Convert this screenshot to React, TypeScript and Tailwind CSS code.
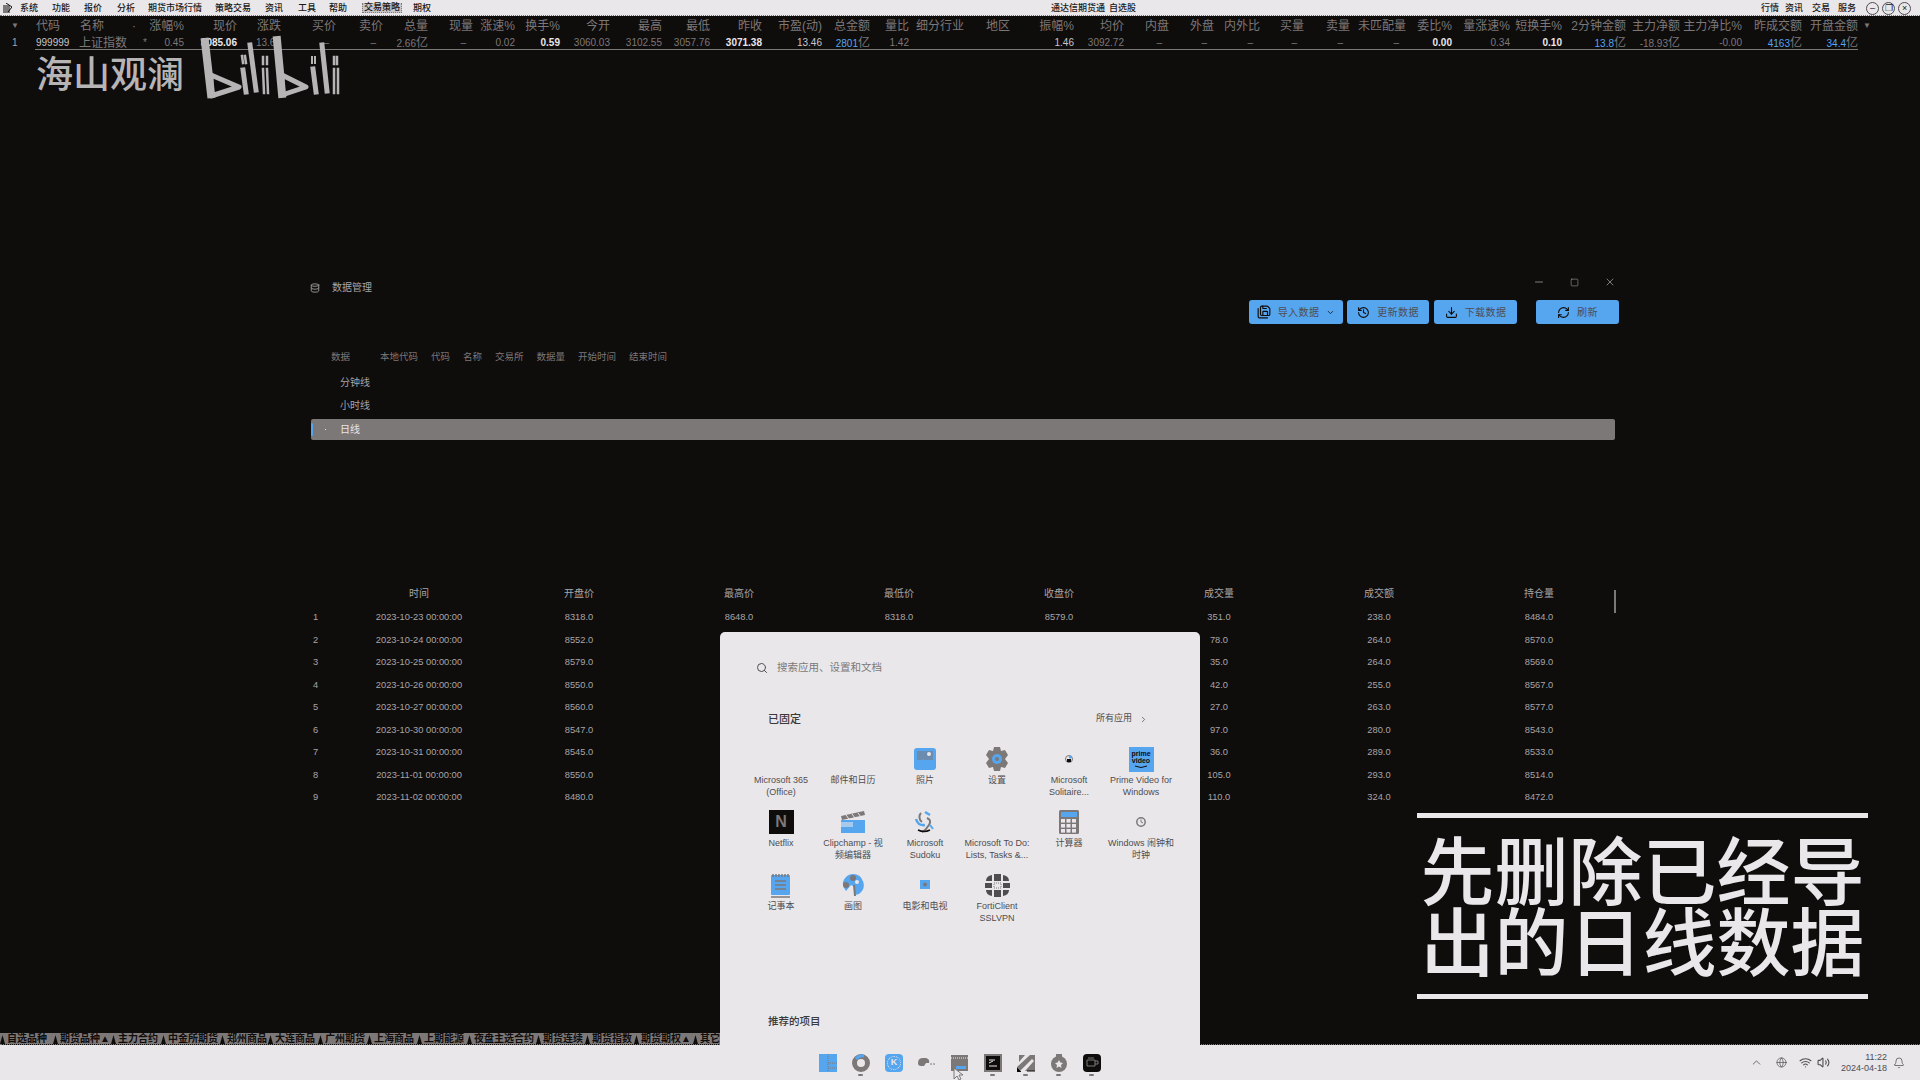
import React from "react";
import {
  Bell, ChevronDown, ChevronRight, ChevronUp, Database, Download, Globe, History,
  Minus, RefreshCw, SaveAll, Search, Square, Volume2, Wifi, X,
} from "lucide-react";

const B = "#56a5ef";
const G = "#7d7878";
const D = "#0f0c0c";

const menus: [string, number][] = [
  ["系统", 18], ["功能", 18], ["报价", 19], ["分析", 17], ["期货市场行情", 53], ["策略交易", 36],
  ["资讯", 19], ["工具", 17], ["帮助", 17],
];

type Col = { h: string; r: number; d?: React.ReactNode; c?: string };
const Yi = ({ n, c = "text-[#56a5ef]" }: { n: string; c?: string }) => (
  <span className="text-[#7d7878]"><span className={c}>{n}</span><span className="text-[12px]">亿</span></span>
);
const dash = <span className="pr-[7px] text-[#7d7878]">–</span>;
const cols: Col[] = [
  { h: "涨幅%", r: 184, d: "0.45" },
  { h: "现价", r: 237, d: <span className="text-[#e9e7ea] font-bold">3085.06</span> },
  { h: "涨跌", r: 281, d: "13.68" },
  { h: "买价", r: 336, d: dash },
  { h: "卖价", r: 383, d: dash },
  { h: "总量", r: 428, d: <Yi n="2.66" c="text-[#7d7878]" /> },
  { h: "现量", r: 473, d: dash },
  { h: "涨速%", r: 515, d: "0.02" },
  { h: "换手%", r: 560, d: <span className="text-[#e9e7ea] font-bold">0.59</span> },
  { h: "今开", r: 610, d: "3060.03" },
  { h: "最高", r: 662, d: "3102.55" },
  { h: "最低", r: 710, d: "3057.76" },
  { h: "昨收", r: 762, d: <span className="text-[#e9e7ea] font-bold">3071.38</span> },
  { h: "市盈(动)", r: 822, d: <span className="text-[#c8c6c8]">13.46</span> },
  { h: "总金额", r: 870, d: <Yi n="2801" /> },
  { h: "量比", r: 909, d: "1.42" },
  { h: "细分行业", r: 964 },
  { h: "地区", r: 1010 },
  { h: "振幅%", r: 1074, d: <span className="text-[#c8c6c8]">1.46</span> },
  { h: "均价", r: 1124, d: "3092.72" },
  { h: "内盘", r: 1169, d: dash },
  { h: "外盘", r: 1214, d: dash },
  { h: "内外比", r: 1260, d: dash },
  { h: "买量", r: 1304, d: dash },
  { h: "卖量", r: 1350, d: dash },
  { h: "未匹配量", r: 1406, d: dash },
  { h: "委比%", r: 1452, d: <span className="text-[#e9e7ea] font-bold">0.00</span> },
  { h: "量涨速%", r: 1510, d: "0.34" },
  { h: "短换手%", r: 1562, d: <span className="text-[#e9e7ea] font-bold">0.10</span> },
  { h: "2分钟金额", r: 1626, d: <Yi n="13.8" /> },
  { h: "主力净额", r: 1680, d: <Yi n="-18.93" c="text-[#7d7878]" /> },
  { h: "主力净比%", r: 1742, d: "-0.00" },
  { h: "昨成交额", r: 1802, d: <Yi n="4163" /> },
  { h: "开盘金额", r: 1858, d: <Yi n="34.4" /> },
];
const widthOf = (i: number) => cols[i].r - (i === 0 ? 150 : cols[i - 1].r);

const table = [
  ["2023-10-23 00:00:00", "8318.0", "8648.0", "8318.0", "8579.0", "351.0", "238.0", "8484.0"],
  ["2023-10-24 00:00:00", "8552.0", "", "", "", "78.0", "264.0", "8570.0"],
  ["2023-10-25 00:00:00", "8579.0", "", "", "", "35.0", "264.0", "8569.0"],
  ["2023-10-26 00:00:00", "8550.0", "", "", "", "42.0", "255.0", "8567.0"],
  ["2023-10-27 00:00:00", "8560.0", "", "", "", "27.0", "263.0", "8577.0"],
  ["2023-10-30 00:00:00", "8547.0", "", "", "", "97.0", "280.0", "8543.0"],
  ["2023-10-31 00:00:00", "8545.0", "", "", "", "36.0", "289.0", "8533.0"],
  ["2023-11-01 00:00:00", "8550.0", "", "", "", "105.0", "293.0", "8514.0"],
  ["2023-11-02 00:00:00", "8480.0", "", "", "", "110.0", "324.0", "8472.0"],
];

const tabs: [string, number][] = [
  ["自选品种", 53], ["期货品种▲", 58], ["主力合约", 50], ["中金所期货", 59], ["郑州商品", 48], ["大连商品", 50],
  ["广州期货", 49], ["上海商品", 50], ["上期能源", 50], ["夜盘主选合约", 69], ["期货连续", 49], ["期货指数", 49],
  ["期货期权▲", 59], ["其它", 27],
];

const Photos = () => (
  <svg width="22" height="22" viewBox="0 0 22 22"><rect width="22" height="22" rx="3" fill={B} /><rect x="3" y="3" width="16" height="9" fill={G} opacity=".55" /><path d="M1 20 9 11l4 4 3-3 5 8z" fill={B} /><circle cx="15" cy="6" r="2" fill="#e9e7ea" /></svg>
);
const Gear = () => (
  <svg width="26" height="26" viewBox="0 0 26 26"><path d="M10 1h6l1 4 4-1 3 5-3 4 3 4-3 5-4-1-1 4h-6l-1-4-4 1-3-5 3-4-3-4 3-5 4 1z" fill={G} /><circle cx="13" cy="13" r="5" fill={B} /><circle cx="13" cy="13" r="2" fill={G} /></svg>
);
const Sol = () => (
  <svg width="26" height="26" viewBox="0 0 26 26"><circle cx="13" cy="13" r="3.5" fill="#e9e7ea" stroke={G} /><rect x="11" y="13" width="4" height="3" fill={D} /><circle cx="14.5" cy="11" r="1.6" fill={B} /></svg>
);
const Prime = () => (
  <div className="relative flex h-[25px] w-[25px] flex-col items-center bg-[#56a5ef] pt-[3px] text-[7px] font-bold leading-[7px] text-[#0f0c0c]">
    <span>prime</span><span>video</span>
    <svg className="mt-[1px]" width="14" height="4" viewBox="0 0 14 4"><path d="M1 1q6 3 12 0" stroke={D} fill="none" /></svg>
  </div>
);
const Netflix = () => (
  <div className="flex h-[24px] w-[25px] items-center justify-center bg-[#0f0c0c] font-['Liberation_Sans'] text-[16px] font-bold leading-none text-[#7d7878]">N</div>
);
const Clip = () => (
  <svg width="26" height="24" viewBox="0 0 26 24"><rect x="1" y="10" width="24" height="13" fill={B} /><path d="M1 12h12v5H1z" fill="#e9e7ea" opacity=".55" /><path d="M1 6 24 1l1 4L2 10z" fill={G} /><path d="M6 5l3 4M12 4l3 4M18 3l3 4" stroke="#e9e7ea" /></svg>
);
const Sudoku = () => (
  <svg width="24" height="24" viewBox="0 0 24 24" fill="none"><path d="M8 3a6 6 0 0 0 1 9" stroke={G} strokeWidth="2" /><path d="M3 9q2 7 9 6" stroke={B} strokeWidth="2.5" /><path d="M12 2l5 3" stroke={B} strokeWidth="2.5" /><path d="M14 8q5 2 2 7t-7 7" stroke={G} strokeWidth="2" /><path d="M5 20q6 3 12 0" stroke={D} strokeWidth="1.5" /><path d="M17 15l3 4" stroke={B} strokeWidth="2" /></svg>
);
const Calc = () => (
  <svg width="20" height="24" viewBox="0 0 20 24"><rect width="20" height="24" rx="1.5" fill={G} /><rect x="2" y="2" width="16" height="5" fill={B} />{[0, 1, 2].flatMap((r) => [0, 1, 2].map((c) => <rect key={`${r}${c}`} x={2 + c * 5.5} y={9 + r * 5} width="4" height="3.6" fill="#e9e7ea" />))}</svg>
);
const Clock = () => (
  <svg width="12" height="12" viewBox="0 0 12 12" fill="none"><circle cx="6" cy="6" r="4.2" stroke={G} strokeWidth="1.5" /><path d="M6 3.5V6l2 1" stroke={G} /></svg>
);
const Notepad = () => (
  <svg width="20" height="25" viewBox="0 0 20 25"><rect x="0" y="2" width="19" height="20" rx="1" fill={B} /><path d="M2 1v3M5 1v3M8 1v3M11 1v3M14 1v3M17 1v3" stroke={G} strokeWidth="1.5" /><path d="M4 8h11M4 12h11M4 16h11" stroke={G} strokeWidth="1.3" /><path d="M0 24h19" stroke={G} strokeWidth="1.5" /></svg>
);
const Paint = () => (
  <svg width="24" height="24" viewBox="0 0 24 24"><path d="M12 1a11 11 0 0 1 6 20l-4 1V14l-4-2-5 6Q1 13 2 9 5 1 12 1z" fill={B} /><circle cx="5" cy="12" r="3" fill={G} /><circle cx="12" cy="5" r="3" fill={G} /><circle cx="16" cy="9" r="2" fill="#e9e7ea" /><path d="M13 12l1 11" stroke={G} strokeWidth="2" /></svg>
);
const Movie = () => (
  <svg width="10" height="10" viewBox="0 0 10 10"><rect width="10" height="9" fill={B} /><circle cx="5" cy="4.5" r="2" fill={G} /></svg>
);
const Forti = () => (
  <svg width="25" height="23" viewBox="0 0 25 23" fill="#4f4d50">
    <path d="M1 7q0-5 6-6v6zM18 1q6 1 6 6h-6zM1 16h6v6q-6-1-6-6zM18 16h6q0 5-6 6z" />
    <rect x="9" y="0" width="7" height="7" />
    <rect x="9" y="16" width="7" height="7" />
    <rect x="0" y="9" width="7" height="5" />
    <rect x="18" y="9" width="7" height="5" />
    <rect x="9" y="9" width="7" height="5" fill="#e9e7ea" stroke="#7d7878" strokeDasharray="1 1" />
  </svg>
);

const apps: [string[], React.ReactNode][] = [
  [["Microsoft 365", "(Office)"], null],
  [["邮件和日历"], null],
  [["照片"], <Photos />],
  [["设置"], <Gear />],
  [["Microsoft", "Solitaire..."], <Sol />],
  [["Prime Video for", "Windows"], <Prime />],
  [["Netflix"], <Netflix />],
  [["Clipchamp - 视", "频编辑器"], <Clip />],
  [["Microsoft", "Sudoku"], <Sudoku />],
  [["Microsoft To Do:", "Lists, Tasks &..."], null],
  [["计算器"], <Calc />],
  [["Windows 闹钟和", "时钟"], <Clock />],
  [["记事本"], <Notepad />],
  [["画图"], <Paint />],
  [["电影和电视"], <Movie />],
  [["FortiClient", "SSLVPN"], <Forti />],
];

const task: [React.ReactNode, boolean][] = [
  [<svg width="18" height="18" viewBox="0 0 18 18"><rect width="18" height="18" fill={B} /><path d="M9 0v18M9 9h9M9 14h9" stroke={G} strokeDasharray="1 1" /></svg>, false],
  [<svg width="18" height="18" viewBox="0 0 18 18" fill="none"><circle cx="9" cy="9" r="6.5" stroke={G} strokeWidth="5" /><path d="M4 5q3-4 8-3" stroke={B} strokeWidth="3" /></svg>, true],
  [<div className="flex h-[18px] w-[18px] items-center justify-center rounded-[4px] bg-[#56a5ef]"><div className="flex h-[14px] w-[14px] items-center justify-center rounded-full border border-dotted border-[#e9e7ea] font-['Liberation_Sans'] text-[9px] font-bold text-[#e9e7ea]">K</div></div>, false],
  [<svg width="18" height="18" viewBox="0 0 18 18" fill={G}><path d="M0 9q0-5 5-5h3q4 1 3 5h-3l-2 3H3Q0 12 0 9z" /><path d="M12 10h2M15 10h2" stroke={G} /></svg>, false],
  [<svg width="18" height="18" viewBox="0 0 18 18"><path d="M0 1h17v16H0z" fill={G} /><path d="M5 12h10v3H5z" fill={B} /><path d="M0 4h17" stroke="#e9e7ea" strokeDasharray="1 1" /></svg>, false],
  [<svg width="18" height="18" viewBox="0 0 18 18"><rect width="18" height="18" fill={G} /><rect x="2" y="2" width="14" height="14" fill={D} /><path d="M5 6h6M5 9l4-2M5 12h8" stroke="#e9e7ea" /></svg>, true],
  [<svg width="18" height="18" viewBox="0 0 18 18"><path d="M2 1h6L2 8z" fill={G} /><path d="M18 1v16H0V13L13 1z" fill={G} /><path d="M3 17 15 5l2 2L8 17z" fill="#e9e7ea" /><path d="M0 14v4h4zM10 17h8" stroke={D} /></svg>, true],
  [<svg width="18" height="18" viewBox="0 0 18 18" fill={G}><rect x="6" y="0" width="6" height="3" /><circle cx="9" cy="10" r="8" /><path d="M9 6l1.3 2.6 2.7.4-2 2 .5 3L9 12.5 6.500 14l.5-3-2-2 2.700-.4z" fill="#e9e7ea" /></svg>, true],
  [<div className="flex h-[18px] w-[18px] items-center justify-center rounded-[4px] bg-[#0f0c0c]"><svg width="13" height="11" viewBox="0 0 13 11" fill="none" stroke="#7d7878"><path d="M1 3h8v6H1zM9 4h3v3H9M3 0v2M5 0v2M7 0v2" /></svg></div>, true],
];

const Bili = () => (
  <svg className="absolute left-[200px] top-[34px]" width="145" height="66" viewBox="200 34 145 66" fill="none" stroke="#b7b4b6" strokeLinecap="square">
    <path d="M205 42l6 52" strokeWidth="8" />
    <path d="M211 75l28 12-28 9z" strokeWidth="5" strokeLinejoin="round" />
    <path d="M242 56l1 7M245 56l1 7" strokeWidth="2.500" />
    <path d="M243 70l3 22" strokeWidth="5" />
    <path d="M250 45l6 45" strokeWidth="5" />
    <path d="M263 57v7M267 57v7" strokeWidth="2.500" />
    <path d="M263 69l1 24M267 69l1 24" strokeWidth="2.500" />
    <path d="M277 40l5 54" strokeWidth="8" />
    <path d="M282 75l24 12-24 8z" strokeWidth="5" strokeLinejoin="round" />
    <path d="M312 57v6M315 57v6" strokeWidth="2" />
    <path d="M313 69l3 23" strokeWidth="5" />
    <path d="M322 45l5 46" strokeWidth="5" />
    <path d="M334 57v7M337 57v7" strokeWidth="2.500" />
    <path d="M334 69v24M338 69v24" strokeWidth="2.500" />
  </svg>
);

const Btn = ({ w, icon, text, extra }: { w: string; icon: React.ReactNode; text: string; extra?: React.ReactNode }) => (
  <div className={`${w} flex h-[24px] items-center justify-center gap-[7px] rounded-[3px] bg-[#56a5ef] text-[10px] tracking-[0.4px] text-[#4f4d50]`}>
    {icon}<span>{text}</span>{extra}
  </div>
);

export default function App() {
  return (
    <div className="relative flex h-[1080px] w-[1920px] flex-col overflow-hidden bg-[#0f0c0c] font-['Liberation_Sans','Noto_Sans_CJK_SC',sans-serif] text-[#7d7878]">
      {/* menu */}
      <div className="flex h-[16px] items-center border-b border-dotted border-[#7d7878] bg-[#e9e7ea] pt-[1px] text-[9px] font-medium leading-none text-[#1a1718]">
        <svg className="ml-[3px] mr-[8px]" width="9" height="11" viewBox="0 0 9 11"><path d="M0 2h7v8H0z" fill={G} /><path d="M3 0l6 4-4 5" stroke={D} fill="none" /></svg>
        <div className="flex gap-[14px]">
          {menus.map(([m, w]) => <span key={m} style={{ width: w }} className="whitespace-nowrap">{m}</span>)}
        </div>
        <span className="ml-[16px] border-x border-b border-dotted border-[#7d7878] bg-[#c8c6c8] px-[1px]">交易策略</span>
        <span className="ml-[11px]">期权</span>
        <span className="ml-[620px]">通达信期货通</span>
        <span className="ml-[4px]">自选股</span>
        <span className="ml-[625px]">行情</span>
        <span className="ml-[6px]">资讯</span>
        <span className="ml-[9px]">交易</span>
        <span className="ml-[8px]">服务</span>
        <div className="ml-[10px] flex gap-[3px]">
          {["–", "❐", "×"].map((s) => <span key={s} className="flex h-[13px] w-[13px] items-center justify-center rounded-full border border-[#4f4d50] text-[9px]">{s}</span>)}
        </div>
      </div>
      {/* quote header */}
      <div className="mt-[1px] flex h-[17px] items-center whitespace-nowrap text-[12px] leading-none">
        <span className="w-[36px] pl-[11px] text-[8px]">▼</span>
        <span className="w-[43px]">代码</span>
        <span className="w-[48px] pl-[1px]">名称</span>
        <span className="w-[23px] pl-[5px]">·</span>
        {cols.map((c, i) => <span key={c.h} style={{ width: widthOf(i) }} className="flex justify-end">{c.h}</span>)}
        <span className="ml-[5px] text-[8px]">▼</span>
      </div>
      <div className="flex h-[15px] items-center whitespace-nowrap pt-[2px] text-[10px] leading-none">
        <span className="w-[36px] pl-[12px] text-[#a8a5a6]">1</span>
        <span className="w-[43px] text-[#c8c6c8]">999999</span>
        <span className="w-[48px] text-[12px]">上证指数</span>
        <span className="w-[23px] pr-[3px] text-right">*</span>
        {cols.map((c, i) => <span key={c.h} style={{ width: widthOf(i) }} className="flex justify-end">{c.d}</span>)}
      </div>
      <div className="ml-[35px] h-[1px] w-[1823px] bg-[#7d7878]" />

      {/* data manager */}
      <div className="ml-[310px] mt-[226px] w-[1310px]">
        <div className="flex h-[24px] justify-between">
          <div className="flex items-center self-end pt-[1px] text-[10px] leading-[24px] text-[#a8a5a6]">
            <Database size={10} />
            <span className="ml-[12px]">数据管理</span>
          </div>
          <div className="mr-[4px] flex h-[12px] items-center gap-[25px] text-[#c8c6c8]">
            <Minus size={12} strokeWidth={1.2} />
            <Square size={9} strokeWidth={1.2} />
            <X size={12} strokeWidth={1.2} />
          </div>
        </div>
        <div className="flex h-[24px] justify-end pr-[1px]">
          <Btn w="w-[94px] mr-[4px]" icon={<SaveAll size={14} className="text-[#0f0c0c]" />} text="导入数据" extra={<ChevronDown size={9} className="text-[#0f0c0c]" />} />
          <Btn w="w-[82px] mr-[5px]" icon={<History size={13} className="text-[#0f0c0c]" />} text="更新数据" />
          <Btn w="w-[83px] mr-[19px]" icon={<Download size={13} className="text-[#0f0c0c]" />} text="下载数据" />
          <Btn w="w-[83px]" icon={<RefreshCw size={13} className="text-[#0f0c0c]" />} text="刷新" />
        </div>
        <div className="mt-[26px] flex h-[14px] items-center pl-[21px] text-[9.500px] leading-none">
          <span className="w-[49px]">数据</span>
          <div className="flex gap-[13px]">
            {["本地代码", "代码", "名称", "交易所", "数据量", "开始时间", "结束时间"].map((t) => <span key={t}>{t}</span>)}
          </div>
        </div>
        <div className="mt-[7px] flex h-[23px] items-center pl-[30px] text-[10px] text-[#a8a5a6]">分钟线</div>
        <div className="flex h-[23px] items-center pl-[30px] text-[10px] text-[#a8a5a6]">小时线</div>
        <div className="ml-[1px] mt-[2px] flex h-[21px] w-[1304px] items-center rounded-[2px] bg-[#7d7878] text-[10px] text-[#e9e7ea]">
          <span className="h-[13px] w-[2px] rounded-full bg-[#56a5ef]" />
          <span className="ml-[12px] h-[1px] w-[1px] bg-[#e9e7ea]" />
          <span className="ml-[14px]">日线</span>
        </div>

        {/* table */}
        <div className="relative mt-[141px] text-[9.300px] text-[#a8a5a6]">
          <div className="absolute left-[1304px] top-[9px] h-[23px] w-[2px] bg-[#7d7878]" />
          <div className="grid h-[25.500px] grid-cols-[29px_repeat(8,160px)] items-center text-center text-[10px] leading-none">
            {["", "时间", "开盘价", "最高价", "最低价", "收盘价", "成交量", "成交额", "持仓量"].map((h, i) => <span key={i}>{h}</span>)}
          </div>
          {table.map((r, i) => (
            <div key={i} className="grid h-[22.500px] grid-cols-[29px_repeat(8,160px)] items-center text-center leading-none">
              <span className="pl-[3px] text-left">{i + 1}</span>
              {r.map((v, j) => <span key={j}>{v}</span>)}
            </div>
          ))}
        </div>
      </div>

      {/* tab strip */}
      <div className="mt-auto flex h-[11px] w-[720px] items-center overflow-hidden bg-[#7d7878] text-[10px] font-bold leading-none text-[#0f0c0c]">
        {tabs.map(([t, w]) => (
          <div key={t} style={{ width: w }} className="flex shrink-0 items-center whitespace-nowrap">
            <svg className="mr-[2px] shrink-0" width="5" height="11" viewBox="0 0 5 11"><path d="M2.500 2 5 11H0z" fill={D} /></svg>
            {t}
          </div>
        ))}
      </div>
      <div className="h-[1px] border-t border-dotted border-[#7d7878]" />

      {/* taskbar */}
      <div className="flex h-[35px] items-center bg-[#e9e7ea]">
        <div className="ml-[819px] flex gap-[15px]">
          {task.map(([ic, dot], i) => (
            <div key={i} className="relative h-[18px] w-[18px]">
              {ic}
              {dot && <span className="absolute left-[6px] top-[20px] h-[2px] w-[5px] rounded-full bg-[#7d7878]" />}
            </div>
          ))}
        </div>
        <div className="ml-auto flex items-center pr-[15px] text-[#4f4d50]">
          <ChevronUp size={13} strokeWidth={1.5} />
          <Globe size={11} strokeWidth={1.5} className="ml-[13px]" />
          <Wifi size={13} strokeWidth={2} className="ml-[12px]" />
          <Volume2 size={13} strokeWidth={2} className="ml-[5px]" />
          <div className="ml-[11px] flex flex-col items-end text-[9px] leading-[11px]">
            <span>11:22</span>
            <span>2024-04-18</span>
          </div>
          <Bell size={12} strokeWidth={1.5} className="ml-[6px]" />
        </div>
      </div>

      {/* start menu */}
      <div className="absolute left-[720px] top-[632px] flex h-[413px] w-[480px] flex-col rounded-t-[5px] bg-[#e9e7ea] pt-[30px] text-[#4f4d50]">
        <div className="ml-[36px] flex h-[12px] items-center text-[10.500px] text-[#7d7878]">
          <Search size={12} strokeWidth={2} className="text-[#4f4d50]" />
          <span className="ml-[9px]">搜索应用、设置和文档</span>
        </div>
        <div className="ml-[48px] mr-[52px] mt-[38px] flex h-[14px] items-center justify-between">
          <span className="text-[11px] font-medium text-[#3c393a]">已固定</span>
          <span className="flex items-center gap-[7px] text-[9px]">所有应用<ChevronRight size={9} /></span>
        </div>
        <div className="ml-[25px] mt-[21px] grid w-[432px] grid-cols-[repeat(6,72px)] auto-rows-[63px]">
          {apps.map(([label, ic], i) => (
            <div key={i} className="flex flex-col items-center">
              <div className="flex h-[24px] w-full items-center justify-center">{ic}</div>
              <div className="mt-[4px] flex flex-col items-center whitespace-nowrap text-[9px] leading-[11.500px]">
                {label.map((l) => <span key={l}>{l}</span>)}
              </div>
            </div>
          ))}
        </div>
        <div className="ml-[48px] mt-[79px] flex h-[14px] items-center text-[10.500px] font-medium text-[#3c393a]">推荐的项目</div>
      </div>

      {/* watermark */}
      <div className="absolute left-[36px] top-[54px] text-[37px] font-medium leading-[44px] text-[#b7b4b6]">海山观澜</div>
      <Bili />

      {/* caption */}
      <div className="absolute left-[1417px] top-[813px] flex h-[186px] w-[451px] flex-col items-center justify-between text-[#e9e7ea]">
        <div className="h-[5px] w-full bg-[#e9e7ea]" />
        <div className="pt-[6px] text-center text-[74px] font-medium leading-[71px] whitespace-nowrap">先删除已经导<br />出的日线数据</div>
        <div className="h-[5px] w-full bg-[#e9e7ea]" />
      </div>

      {/* cursor */}
      <svg className="absolute left-[953px] top-[1068px]" width="10" height="12" viewBox="0 0 10 12"><path d="M1 0v11l3-3 2 4 2-1-2-4h4z" fill="#e9e7ea" stroke={G} /></svg>
    </div>
  );
}
